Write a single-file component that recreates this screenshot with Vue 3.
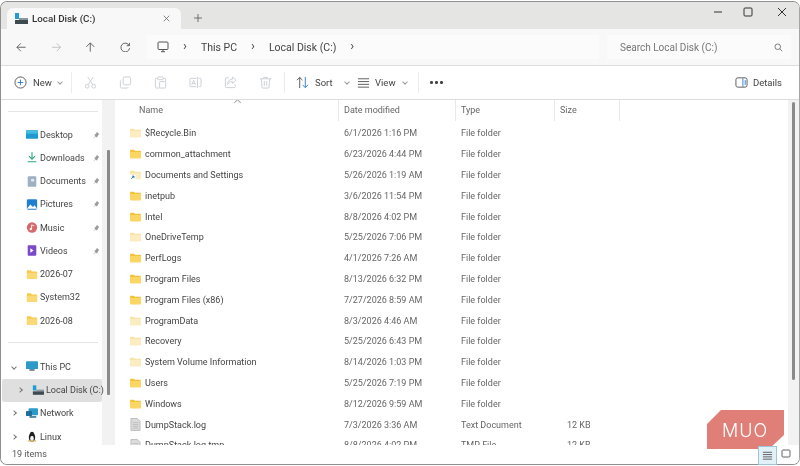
<template>
  <div class="screen">
    <div class="behind top">Procedures in an order of the Home Guide and other notes about the drive</div>
    <div class="window">
      <div class="tabbar">
        <div class="tab">
          <svg class="drive" viewBox="0 0 14 12"><rect x="1" y="0" width="4" height="6" fill="#1f9bd6"/><rect x="5" y="5" width="9" height="2" fill="#8a98a0"/><rect x="1" y="7" width="13" height="4" fill="#3d4a4f"/></svg>
          <span class="tab-title">Local Disk (C:)</span>
          <svg class="tab-x" viewBox="0 0 10 10"><path d="M1 1l8 8M9 1l-8 8" /></svg>
        </div>
        <svg class="tab-plus" viewBox="0 0 10 10"><path d="M5 0v10M0 5h10" /></svg>
        <div class="caption">
          <svg viewBox="0 0 10 10"><path d="M1 5h8" /></svg>
          <svg viewBox="0 0 10 10"><rect x="1" y="1" width="8" height="8" rx="1" /></svg>
          <svg viewBox="0 0 10 10"><path d="M1 1l8 8M9 1l-8 8" /></svg>
        </div>
      </div>

      <div class="addressbar">
        <div class="nav">
          <svg viewBox="0 0 12 12"><path d="M11 6H1M5.500 1.500L1 6l4.500 4.500" /></svg>
          <svg class="off" viewBox="0 0 12 12"><path d="M1 6h10M6.500 1.500L11 6l-4.500 4.500" /></svg>
          <svg viewBox="0 0 12 12"><path d="M6 11V1M1.500 5.500L6 1l4.500 4.500" /></svg>
          <svg viewBox="0 0 12 12"><path d="M10.500 4A5 5 0 1 0 11 7M10.800 1v3.200H7.600" /></svg>
        </div>
        <div class="crumbs">
          <svg class="monitor" viewBox="0 0 12 12"><rect x="1" y="1" width="10" height="7.500" rx="1" /><path d="M6 8.500v2M4 10.700h4" /></svg>
          <span class="sep">›</span>
          <span>This PC</span>
          <span class="sep">›</span>
          <span>Local Disk (C:)</span>
          <span class="sep">›</span>
        </div>
        <div class="search">
          <span>Search Local Disk (C:)</span>
          <svg viewBox="0 0 12 12"><circle cx="5" cy="5" r="3.700" /><path d="M7.800 7.800L11 11" /></svg>
        </div>
      </div>

      <div class="toolbar">
        <button class="cmd new">
          <svg viewBox="0 0 14 14"><circle cx="7" cy="7" r="6" /><path class="blue" d="M7 4v6M4 7h6" /></svg>
          <span>New</span><i class="chev"></i>
        </button>
        <span class="divider"></span>
        <div class="icons">
          <svg viewBox="0 0 14 14"><circle cx="3.500" cy="11" r="2" /><circle cx="10.500" cy="11" r="2" /><path d="M4.500 9.300L10 1M9.500 9.300L4 1" /></svg>
          <svg viewBox="0 0 14 14"><rect x="4.500" y="1" width="8" height="8.500" rx="1.500" /><path d="M2.500 4.500A1.500 1.500 0 0 0 1.500 6v5.500A1.500 1.500 0 0 0 3 13h5.500a1.500 1.500 0 0 0 1.500-1" /></svg>
          <svg viewBox="0 0 14 14"><path d="M4 2.500H2.500a1 1 0 0 0-1 1V12a1 1 0 0 0 1 1H6M10 2.500h1.500a1 1 0 0 1 1 1V6" /><rect x="4" y="1" width="6" height="3" rx="1" /><rect x="6" y="6" width="6.500" height="7" rx="1" /></svg>
          <svg viewBox="0 0 14 14"><path d="M8 2.500H2a1 1 0 0 0-1 1v7a1 1 0 0 0 1 1h6M10.500 2.500H12a1 1 0 0 1 1 1v7a1 1 0 0 1-1 1h-1.500M9.200 1v12M3 9.500L5 4.500l2 5M3.800 8h2.400" /></svg>
          <svg viewBox="0 0 14 14"><path d="M5 2H2.500a1 1 0 0 0-1 1v8.500a1 1 0 0 0 1 1H11a1 1 0 0 0 1-1V9M9 1l4 3.500L9 8V6C6.500 6 5 7 4 9c0-3 1.500-5.500 5-5.500z" /></svg>
          <svg viewBox="0 0 14 14"><path d="M1 3h12M5 3V1.500h4V3M2.500 3l.7 9a1 1 0 0 0 1 1h5.600a1 1 0 0 0 1-1l.7-9M5.700 5.500v5M8.300 5.500v5" /></svg>
        </div>
        <span class="divider"></span>
        <button class="cmd sort">
          <svg viewBox="0 0 14 14"><path d="M4 13V1.500M1 4.500l3-3 3 3" /><path class="blue" d="M10 1v11.500M7 9.500l3 3 3-3" /></svg>
          <span>Sort</span><i class="chev"></i>
        </button>
        <button class="cmd view">
          <svg viewBox="0 0 14 14"><path d="M1 3h12M1 6h12M1 9h12M1 12h12" /></svg>
          <span>View</span><i class="chev"></i>
        </button>
        <span class="divider"></span>
        <div class="more"><b></b><b></b><b></b></div>
        <button class="cmd details">
          <svg viewBox="0 0 14 12"><rect x="1" y="1" width="12" height="10" rx="2" /><path class="blue" d="M8.500 1.500v9M11 3.500v5" /></svg>
          <span>Details</span>
        </button>
      </div>

      <div class="main">
        <aside class="sidebar">
          <div class="rule"></div>
          <div v-for="q in quick" :key="q.name" class="side-item">
            <svg class="side-icon" viewBox="0 0 14 12" v-html="q.icon"></svg>
            <span class="side-name">{{ q.name }}</span>
            <svg v-if="q.pin" class="pin" viewBox="0 0 10 10"><path d="M6 .8l3.200 3.200-1 .5-1.400 2.300-.5 1.500-1.500-1.500L1.500 9.500l2.700-3.400L2.700 4.700l1.500-.6 1.400-1.500z" /></svg>
          </div>
          <div class="rule lower"></div>
          <div class="side-item tree">
            <i class="twist open"></i>
            <svg class="side-icon" viewBox="0 0 14 12"><rect x="0" y="0" width="14" height="9" rx="1" fill="#2d9ac9" /><rect x="4" y="9" width="6" height="2" fill="#5e7f8f" /></svg>
            <span class="side-name">This PC</span>
          </div>
          <div class="side-item tree current">
            <i class="twist"></i>
            <svg class="side-icon" viewBox="0 0 14 12"><rect x="1" y="0" width="4" height="6" fill="#1f9bd6" /><rect x="5" y="5" width="9" height="2" fill="#8a98a0" /><rect x="1" y="7" width="13" height="4" fill="#3d4a4f" /></svg>
            <span class="side-name">Local Disk (C:)</span>
          </div>
          <div class="side-item tree">
            <i class="twist"></i>
            <svg class="side-icon" viewBox="0 0 14 12"><rect x="3" y="0" width="11" height="8" rx="1" fill="#2d9ac9" /><rect x="0" y="3" width="7" height="6" rx="1" fill="#1d6f9a" /><rect x="4" y="9" width="8" height="2" fill="#3f7c9e" /></svg>
            <span class="side-name">Network</span>
          </div>
          <div class="side-item tree">
            <i class="twist"></i>
            <svg class="side-icon" viewBox="0 0 14 14"><ellipse cx="7" cy="8" rx="4" ry="5.500" fill="#222" /><ellipse cx="7" cy="9.500" rx="2.300" ry="3.300" fill="#f4f4f4" /><circle cx="7" cy="3.500" r="2.500" fill="#222" /><path d="M2 12h4v1.500H2zM8 12h4v1.500H8z" fill="#e8b020" /></svg>
            <span class="side-name">Linux</span>
          </div>
          <div class="side-thumb"></div>
        </aside>

        <section class="files">
          <i class="sort-mark"></i>
          <div class="head">
            <span>Name</span>
            <span>Date modified</span>
            <span>Type</span>
            <span>Size</span>
          </div>
          <div class="rows">
            <div v-for="f in files" :key="f.name" class="row">
              <span class="name">
                <svg v-if="f.kind === 'file'" class="file-icon" viewBox="0 0 12 14"><path d="M1 .5h7l3 3v10H1z" fill="#dcdcdc" stroke="#a8a8a8" stroke-width=".7" /><path d="M3 5h6M3 7h6M3 9h6M3 11h6" stroke="#a8a8a8" stroke-width=".6" /></svg>
                <svg v-else class="folder" :class="f.kind" viewBox="0 0 14 12"><path d="M0 1.500A1 1 0 0 1 1 .5h4l1.500 1.500H13a1 1 0 0 1 1 1V10.500a1 1 0 0 1-1 1H1a1 1 0 0 1-1-1z" /><path class="front" d="M0 3.500h14v7a1 1 0 0 1-1 1H1a1 1 0 0 1-1-1z" /><path v-if="f.kind === 'link'" d="M0 6h7v6H0z" fill="#fff" /><path v-if="f.kind === 'link'" d="M1.500 11L5 7.500M2.500 7.500H5V10" fill="none" stroke="#1a6fc0" stroke-width="1.200" /></svg>
                {{ f.name }}
              </span>
              <span>{{ f.date }}</span>
              <span>{{ f.type }}</span>
              <span class="size">{{ f.size }}</span>
            </div>
          </div>
        </section>
        <div class="vscroll"><div class="vthumb"></div></div>
      </div>

      <div class="status">19 items</div>
    </div>

    <div class="badge"><span>MUO</span></div>
    <div class="viewtoggle">
      <span class="list-on"><svg viewBox="0 0 12 12"><path d="M1 2.500h10M1 5h10M1 7.500h10M1 10h10" /></svg></span>
      <svg class="tiles" viewBox="0 0 10 10"><rect x="1" y="1" width="8" height="7" rx="1" /></svg>
    </div>
    <div class="behind bottom">Procedures in an order of the Home Guide and other notes about the drive</div>
  </div>
</template>

<script setup>
const folderIcon = '<path d="M1 2a1 1 0 0 1 1-1h3.500l1.500 1.500h5a1 1 0 0 1 1 1V10a1 1 0 0 1-1 1H2a1 1 0 0 1-1-1z" fill="#f7c948"/><path d="M1 4h12v6a1 1 0 0 1-1 1H2a1 1 0 0 1-1-1z" fill="#fbd976"/>'

const quick = [
  { name: 'Desktop', pin: true, icon: '<rect x="0" y="1" width="14" height="10" rx="1" fill="#1e9ad0"/><rect x="0" y="1" width="14" height="4" fill="#46bce0"/>' },
  { name: 'Downloads', pin: true, icon: '<path d="M7 0v7.500M3.500 4.500L7 8l3.500-3.500M2 11h10" fill="none" stroke="#2fa87a" stroke-width="1.300"/>' },
  { name: 'Documents', pin: true, icon: '<rect x="2" y="0" width="10" height="12" rx="1" fill="#9fb0c2"/><rect x="6" y="3" width="3.500" height="3" fill="#e4eaf0"/>' },
  { name: 'Pictures', pin: true, icon: '<rect x="1" y="0" width="12" height="12" rx="1.500" fill="#1c7fd0"/><path d="M1 11l4-5 3 3 2-2 3 4z" fill="#fff"/>' },
  { name: 'Music', pin: true, icon: '<circle cx="7" cy="6" r="6" fill="#d8696b"/><path d="M6.500 8V3l3 1" fill="none" stroke="#fff" stroke-width="1"/><circle cx="5.500" cy="8" r="1.300" fill="#fff"/>' },
  { name: 'Videos', pin: true, icon: '<rect x="2" y="0" width="10" height="12" rx="1" fill="#7a48c8"/><path d="M5 3.500l4 2.500-4 2.500z" fill="#fff"/>' },
  { name: '2026-07', icon: folderIcon },
  { name: 'System32', icon: folderIcon },
  { name: '2026-08', icon: folderIcon }
]

const folder = (name, date, kind = 'normal') => ({ name, date, kind, type: 'File folder', size: '' })

const files = [
  folder('$Recycle.Bin', '6/1/2026 1:16 PM', 'hidden'),
  folder('common_attachment', '6/23/2026 4:44 PM'),
  folder('Documents and Settings', '5/26/2026 1:19 AM', 'link'),
  folder('inetpub', '3/6/2026 11:54 PM'),
  folder('Intel', '8/8/2026 4:02 PM'),
  folder('OneDriveTemp', '5/25/2026 7:06 PM', 'hidden'),
  folder('PerfLogs', '4/1/2026 7:26 AM'),
  folder('Program Files', '8/13/2026 6:32 PM'),
  folder('Program Files (x86)', '7/27/2026 8:59 AM'),
  folder('ProgramData', '8/3/2026 4:46 AM', 'hidden'),
  folder('Recovery', '5/25/2026 6:43 PM', 'hidden'),
  folder('System Volume Information', '8/14/2026 1:03 PM', 'hidden'),
  folder('Users', '5/25/2026 7:19 PM'),
  folder('Windows', '8/12/2026 9:59 AM'),
  { name: 'DumpStack.log', date: '7/3/2026 3:36 AM', type: 'Text Document', size: '12 KB', kind: 'file' },
  { name: 'DumpStack.log.tmp', date: '8/8/2026 4:02 PM', type: 'TMP File', size: '12 KB', kind: 'file' }
]
</script>

<style>
html, body {
  margin: 0;
  background: #fff;
  overflow: hidden;
}
</style>

<style scoped>
.screen {
  position: relative;
  width: 800px;
  height: 466px;
  overflow: hidden;
  background: #fff;
  font-family: Roboto, "Noto Sans", sans-serif;
  font-size: 9px;
  color: #444;
  filter: blur(0.3px);
}

svg {
  display: block;
  fill: none;
  stroke: #555;
  stroke-width: 1;
}

.behind {
  position: absolute;
  left: 60px;
  height: 1px;
  overflow: hidden;
  white-space: nowrap;
  font-size: 13px;
  line-height: 13px;
  color: #333;
}

.behind.top {
  top: 0;
}

.behind.bottom {
  bottom: 0;
}

.window {
  box-sizing: border-box;
  height: 464px;
  margin-top: 1px;
  display: flex;
  flex-direction: column;
  overflow: hidden;
  border: 1px solid #8f8f8f;
  border-right-color: #a5a5a5;
  border-radius: 7px;
  background: #fff;
}

.tabbar {
  flex: none;
  height: 27px;
  padding-left: 6px;
  display: flex;
  align-items: flex-end;
  background: #e5e5e3;
}

.tab {
  width: 174px;
  height: 21px;
  display: flex;
  align-items: center;
  border-radius: 6px 6px 0 0;
  background: #f8f8f8;
}

.drive {
  width: 14px;
  height: 12px;
  margin-left: 7px;
  stroke: none;
}

.tab-title {
  margin-left: 4px;
  font-size: 9.800px;
  font-weight: 500;
  color: #333;
}

.tab-x {
  width: 7px;
  height: 7px;
  margin-left: auto;
  margin-right: 11px;
}

.tab-plus {
  width: 8px;
  height: 8px;
  margin: 0 0 7px 13px;
}

.caption {
  margin-left: auto;
  align-self: flex-start;
  margin-top: 5px;
  margin-right: 12px;
  display: flex;
  gap: 20px;
}

.caption svg {
  width: 10px;
  height: 10px;
  stroke: #333;
}

.caption svg:last-child {
  margin-left: 4px;
}

.addressbar {
  flex: none;
  height: 36px;
  display: flex;
  align-items: center;
  background: #f8f8f8;
  border-bottom: 1px solid #dedede;
}

.nav {
  width: 146px;
  padding-left: 15px;
  box-sizing: border-box;
  display: flex;
  gap: 24px;
}

.nav svg {
  width: 10.500px;
  height: 10.500px;
}

.nav svg.off {
  stroke: #bdbdbd;
}

.crumbs {
  width: 452px;
  height: 24px;
  padding-left: 10px;
  box-sizing: border-box;
  display: flex;
  align-items: center;
  gap: 14px;
  background: #fbfbfb;
  font-size: 10.500px;
  color: #444;
}

.monitor {
  width: 12px;
  height: 12px;
}

.sep {
  font-size: 13px;
  line-height: 14px;
  margin-top: -2px;
}

.search {
  width: 184px;
  height: 24px;
  margin-left: 8px;
  padding: 0 8px 0 13px;
  box-sizing: border-box;
  display: flex;
  align-items: center;
  justify-content: space-between;
  background: #fbfbfb;
  font-size: 10px;
  color: #777;
}

.search svg {
  width: 9px;
  height: 9px;
}

.toolbar {
  flex: none;
  height: 33px;
  display: flex;
  align-items: center;
  background: #fff;
  border-bottom: 1px solid #dcdcdc;
}

.cmd {
  all: unset;
  display: flex;
  align-items: center;
  font-size: 9.500px;
  color: #444;
}

.cmd svg {
  width: 13px;
  height: 13px;
}

.blue {
  stroke: #2b7cd3;
}

.chev {
  width: 3px;
  height: 3px;
  margin: -2px 0 0 6px;
  border-right: 1px solid #999;
  border-bottom: 1px solid #999;
  transform: rotate(45deg);
}

.new {
  width: 70px;
  padding-left: 13px;
  box-sizing: border-box;
  gap: 6px;
}

.new .chev {
  margin-left: 0;
}

.divider {
  width: 1px;
  height: 21px;
  background: #ececec;
}

.icons {
  width: 212px;
  padding-left: 12px;
  box-sizing: border-box;
  display: flex;
  gap: 22px;
}

.icons svg {
  width: 13px;
  height: 13px;
  stroke: #c8ced4;
}

.sort {
  width: 72px;
  padding-left: 11px;
  gap: 6px;
  box-sizing: border-box;
}

.view {
  width: 61px;
  box-sizing: border-box;
  gap: 5px;
}

.view .chev {
  margin-left: 2px;
}

.more {
  margin-left: 11px;
  display: flex;
  gap: 2.500px;
}

.more b {
  width: 2.500px;
  height: 2.500px;
  border-radius: 50%;
  background: #444;
}

.details {
  margin-left: auto;
  margin-right: 17px;
  gap: 5px;
}

.main {
  flex: 1;
  min-height: 0;
  display: flex;
}

.sidebar {
  position: relative;
  flex: none;
  width: 114px;
  box-sizing: border-box;
  padding: 11px 12px 0 0;
  background: linear-gradient(to right, #fff 101px, #f2f2f2 101px);
  overflow: hidden;
}

.rule {
  height: 1px;
  margin: 0 5px 0 7px;
  background: #e4e4e4;
}

.rule.lower {
  margin-top: 10px;
  margin-bottom: 12px;
}

.side-item {
  height: 23.250px;
  display: flex;
  align-items: center;
  padding-left: 25px;
  position: relative;
}

.rule + .side-item {
  margin-top: 11px;
}

.rule.lower + .side-item {
  margin-top: 0;
}

.side-icon {
  flex: none;
  width: 12px;
  height: 11px;
  margin-right: 2px;
  stroke: none;
}

.side-name {
  white-space: nowrap;
}

.pin {
  position: absolute;
  left: 91px;
  width: 8px;
  height: 8px;
  fill: #9a9a9a;
  stroke: none;
}

.current {
  width: 100px;
  margin-left: 1px;
  padding-left: 30px;
  box-sizing: border-box;
  background: #dfdfdf;
  border-radius: 2px;
}

.twist {
  position: absolute;
  left: 11px;
  width: 3px;
  height: 3px;
  border-right: 1px solid #777;
  border-top: 1px solid #777;
  transform: rotate(45deg);
}

.current .twist {
  left: 16px;
}

.twist.open {
  transform: rotate(135deg);
}

.side-thumb {
  position: absolute;
  left: 106px;
  top: 50px;
  width: 2.500px;
  height: 245px;
  background: #8a8a8a;
  border-radius: 1px;
}

.files {
  position: relative;
  flex: 1;
  min-width: 0;
  overflow: hidden;
}

.sort-mark {
  position: absolute;
  left: 120px;
  top: 0;
  width: 4px;
  height: 4px;
  border-left: 1px solid #aaa;
  border-top: 1px solid #aaa;
  transform: rotate(45deg);
}

.head {
  height: 21px;
  display: grid;
  grid-template-columns: 224px 117px 99px 65px;
  color: #666;
}

.head span {
  padding-left: 5px;
  line-height: 21px;
  border-right: 1px solid #e8e8e8;
}

.head span:first-child {
  padding-left: 24px;
}

.rows {
  padding-top: 2px;
}

.row {
  height: 20.800px;
  display: grid;
  grid-template-columns: 224px 117px 99px 65px;
  align-items: center;
  white-space: nowrap;
}

.row > span {
  padding-left: 5px;
  color: #666;
}

.row > span.name {
  padding-left: 15px;
  display: flex;
  align-items: center;
  gap: 4px;
  color: #444;
  overflow: hidden;
}

.row > span.size {
  padding-left: 12px;
}

.folder {
  flex: none;
  width: 11px;
  height: 10px;
  stroke: none;
  fill: #f5c33b;
}

.folder .front {
  fill: #fbd663;
}

.folder.hidden,
.folder.link {
  fill: #f9e4a8;
}

.folder.hidden .front,
.folder.link .front {
  fill: #fcecc2;
}

.file-icon {
  flex: none;
  width: 11px;
  height: 13px;
  stroke: none;
}

.vscroll {
  flex: none;
  width: 11px;
  background: #f2f2f2;
  position: relative;
}

.vthumb {
  position: absolute;
  left: 4px;
  top: 2px;
  width: 3px;
  height: 278px;
  border-radius: 2px;
  background: #8a8a8a;
}

.status {
  flex: none;
  height: 19px;
  padding-left: 11px;
  line-height: 19px;
  background: #fff;
  color: #555;
}

.badge {
  position: absolute;
  left: 707px;
  top: 410px;
  width: 77px;
  height: 39px;
  display: flex;
  align-items: center;
  justify-content: center;
  background: #e07f78;
  clip-path: polygon(14px 0, 100% 0, 100% 25px, 62px 100%, 0 100%, 0 14px);
}

.badge span {
  margin-left: -1px;
  margin-top: 1px;
  font-family: Inter, sans-serif;
  font-size: 18px;
  font-weight: 300;
  letter-spacing: 1px;
  color: #fff;
}

.viewtoggle {
  position: absolute;
  left: 758px;
  top: 446px;
  display: flex;
  align-items: center;
  gap: 4px;
}

.list-on {
  width: 17px;
  height: 17px;
  display: flex;
  align-items: center;
  justify-content: center;
  border: 1px solid #9cc6dc;
  background: #e2f0f7;
}

.list-on svg {
  width: 11px;
  height: 11px;
  stroke: #555;
}

.tiles {
  width: 10px;
  height: 10px;
  stroke: #666;
  margin-top: -4px;
}
</style>
